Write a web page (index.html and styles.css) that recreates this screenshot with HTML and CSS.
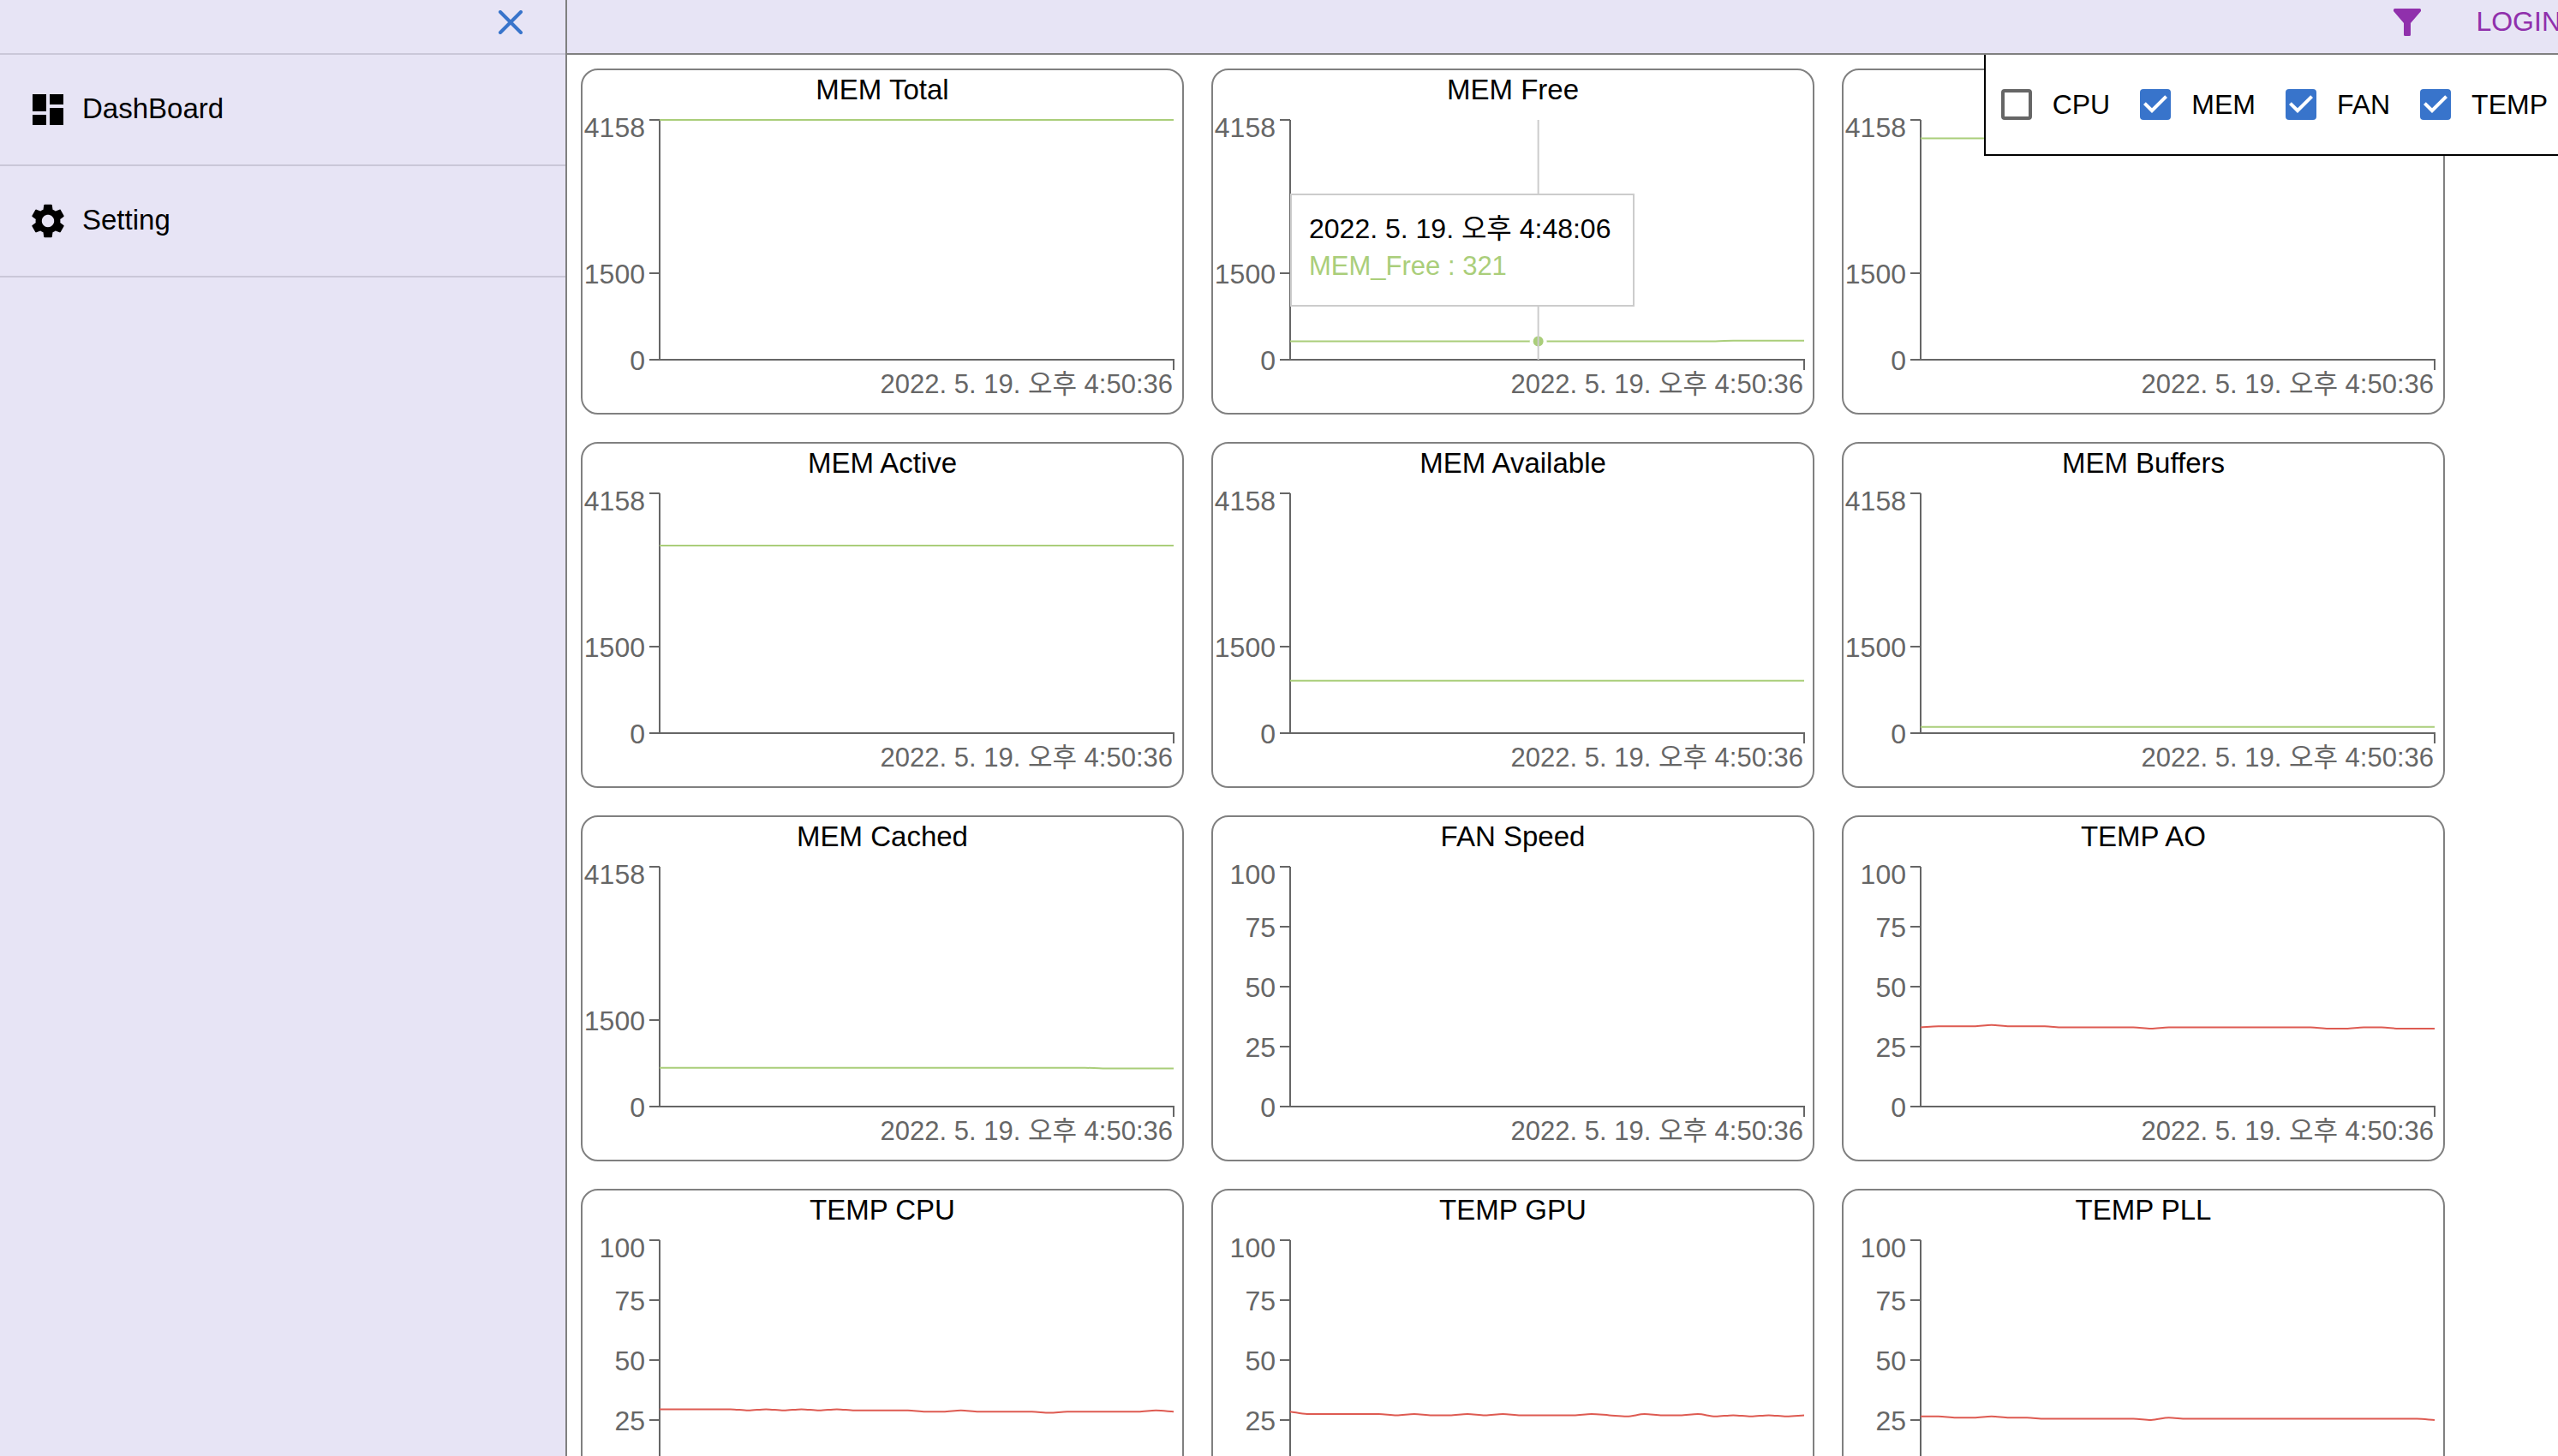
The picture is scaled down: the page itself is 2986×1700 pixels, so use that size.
FILE: index.html
```html
<!DOCTYPE html>
<html lang="ko">
<head>
<meta charset="utf-8">
<meta name="viewport" content="width=device-width, initial-scale=1">
<title>DashBoard</title>
<link rel="stylesheet" href="styles.css">
</head>
<body>
<div class="app">
  <aside class="sidebar">
    <div class="sidebar-top">
      <button class="icon-button close-button" type="button" aria-label="Close menu">
        <svg class="close-icon" viewBox="0 0 28 28" aria-hidden="true"><path d="M2 2L26 26M26 2L2 26"/></svg>
      </button>
    </div>
    <nav>
      <a class="nav-item" href="#dashboard">
        <svg class="nav-icon" viewBox="0 0 24 24" aria-hidden="true"><path d="M3 13h8V3H3v10zm0 8h8v-6H3v6zm10 0h8V11h-8v10zm0-18v6h8V3h-8z"/></svg>
        <span class="nav-label">DashBoard</span>
      </a>
      <a class="nav-item" href="#setting">
        <svg class="nav-icon" viewBox="0 0 24 24" aria-hidden="true"><path d="M19.14 12.94c.04-.3.06-.61.06-.94 0-.32-.02-.64-.07-.94l2.03-1.58c.18-.14.23-.41.12-.61l-1.92-3.32c-.12-.22-.37-.29-.59-.22l-2.39.96c-.5-.38-1.03-.7-1.62-.94l-.36-2.54c-.04-.24-.24-.41-.48-.41h-3.84c-.24 0-.43.17-.47.41l-.36 2.54c-.59.24-1.13.57-1.62.94l-2.39-.96c-.22-.08-.47 0-.59.22L2.74 8.87c-.12.21-.08.47.12.61l2.03 1.58c-.05.3-.09.63-.09.94s.02.64.07.94l-2.03 1.58c-.18.14-.23.41-.12.61l1.92 3.32c.12.22.37.29.59.22l2.39-.96c.5.38 1.03.7 1.62.94l.36 2.54c.05.24.24.41.48.41h3.84c.24 0 .44-.17.47-.41l.36-2.54c.59-.24 1.13-.56 1.62-.94l2.39.96c.22.08.47 0 .59-.22l1.92-3.32c.12-.22.07-.47-.12-.61l-2.01-1.58zM12 15.6c-1.98 0-3.6-1.62-3.6-3.6s1.62-3.6 3.6-3.6 3.6 1.62 3.6 3.6-1.62 3.6-3.6 3.6z"/></svg>
        <span class="nav-label">Setting</span>
      </a>
    </nav>
  </aside>

  <div class="content">
    <header class="topbar">
      <div class="topbar-tools">
        <button class="icon-button filter-button" type="button" aria-label="Filter">
          <svg class="filter-icon" viewBox="0 0 32 32" aria-hidden="true"><path d="M1.500 0H30.500Q32 0 32 1.500V3L20 17V30.500Q20 32 18.500 32H13.500Q12 32 12 30.500V17L0 3V1.500Q0 0 1.500 0Z"/></svg>
        </button>
        <button class="login-button" type="button">LOGIN</button>
      </div>
    </header>
    <form class="filter-panel">
      <label class="filter-option"><input type="checkbox" name="cpu">CPU</label>
      <label class="filter-option"><input type="checkbox" name="mem" checked>MEM</label>
      <label class="filter-option"><input type="checkbox" name="fan" checked>FAN</label>
      <label class="filter-option"><input type="checkbox" name="temp" checked>TEMP</label>
    </form>
    <main class="charts" id="charts"></main>
  </div>
</div>
<script src="charts.js"></script>
</body>
</html>
```
FILE: styles.css
```css
* {
  box-sizing: border-box;
}

body {
  margin: 0;
  background: #fff;
  color: #000;
  font-family: "Liberation Sans", "Noto Sans CJK KR", sans-serif;
  font-size: 32px;
  line-height: 36px;
}

button {
  padding: 0;
  border: 0;
  background: none;
  font: inherit;
  cursor: pointer;
}

.app {
  display: flex;
  height: 100vh;
  overflow: hidden;
}

/* Sidebar */
.sidebar {
  flex: 0 0 662px;
  border-right: 2px solid #808080;
  background: #e7e4f5;
}

.sidebar-top {
  display: flex;
  align-items: center;
  justify-content: flex-end;
  height: 64px;
  padding: 0 48px 10px 0;
  border-bottom: 2px solid #cac7d8;
}

.icon-button {
  display: flex;
}

.close-icon {
  width: 32px;
  height: 28px;
  fill: none;
  stroke: #3874cb;
  stroke-width: 4;
  stroke-linecap: round;
}

.nav-item {
  display: flex;
  align-items: center;
  gap: 16px;
  height: 130px;
  padding: 0 32px;
  border-bottom: 2px solid #cac7d8;
  color: inherit;
  font-size: 33px;
  text-decoration: none;
}

.nav-icon {
  width: 48px;
  height: 48px;
}

.nav-label {
  padding-bottom: 2px;
}

/* Top bar */
.content {
  position: relative;
  flex: 1;
  min-width: 0;
  overflow: hidden;
}

.topbar {
  display: flex;
  justify-content: flex-end;
  height: 64px;
  padding: 8px 0;
  border-bottom: 2px solid #808080;
  background: #e7e4f5;
}

.topbar-tools {
  display: flex;
  align-items: flex-start;
  gap: 64px;
  margin-right: -4px;
}

.filter-icon {
  width: 32px;
  height: 36px;
  fill: #9030ac;
}

.login-button {
  color: #9030ac;
  line-height: 34px;
}

.filter-panel {
  position: absolute;
  z-index: 2;
  top: 64px;
  right: 0;
  display: flex;
  align-items: center;
  gap: 35px;
  height: 118px;
  padding: 0 12px 0 18px;
  border: solid #000;
  border-width: 0 0 2px 2px;
  background: #fff;
}

.filter-option {
  display: flex;
  align-items: center;
  gap: 24px;
}

.filter-option input {
  appearance: none;
  width: 36px;
  height: 36px;
  margin: 0;
  border: 4px solid #666;
  border-radius: 4px;
}

.filter-option input:checked {
  border: 0;
  background: #3874cb url("data:image/svg+xml,%3Csvg xmlns='http://www.w3.org/2000/svg' viewBox='3 3 18 18'%3E%3Cpath fill='white' d='M10 17l-5-5 1.41-1.41L10 14.17l7.59-7.59L19 8l-9 9z'/%3E%3C/svg%3E");
}

/* Chart cards */
.charts {
  display: grid;
  grid-template-columns: repeat(auto-fill, 704px);
  gap: 32px;
  padding: 16px;
}

.card {
  position: relative;
  height: 404px;
  border: 2px solid #808080;
  border-radius: 20px;
}

.card-title {
  margin: 0;
  padding-top: 6px;
  font-size: 33px;
  font-weight: 400;
  line-height: 34px;
  text-align: center;
}

.chart {
  display: block;
  width: 700px;
  height: 350px;
}

.axis {
  fill: none;
  stroke: #666;
  stroke-width: 2;
}

.tick {
  fill: #666;
  font-size: 32px;
  text-anchor: end;
}

.tick-time {
  font-size: 31px;
}

.line {
  fill: none;
  stroke-width: 2;
}

.line-mem {
  stroke: #aace7a;
}

.line-temp {
  stroke: #de5b52;
}

.dot {
  fill: #aace7a;
  stroke: #fff;
  stroke-width: 4;
}

.cursor {
  stroke: #ccc;
  stroke-width: 2;
}

.tooltip {
  position: absolute;
  top: 144px;
  left: 90px;
  min-width: 402px;
  height: 132px;
  padding: 20px;
  border: 2px solid #ccc;
  background: #fff;
  line-height: 38px;
  white-space: nowrap;
}

.tooltip p {
  margin: 0;
}

.tooltip .tooltip-value {
  padding-top: 6px;
  color: #aace7a;
  font-size: 31px;
}
```
FILE: charts.js
```js
const PLOT = { left: 90, right: 690, top: 18, bottom: 298 };
const POINTS = 30;
const END_TIME = "2022. 5. 19. 오후 4:50:36";

const flat = (value) => Array(POINTS).fill(value);
// Expands [value, count] pairs into one reading per sample.
const runs = (...pairs) => pairs.flatMap(([value, count]) => Array(count).fill(value));

const MEM = { kind: "mem", max: 4158, ticks: [0, 1500, 4158] };
const FAN = { kind: "fan", max: 100, ticks: [0, 25, 50, 75, 100] };
const TEMP = { kind: "temp", max: 100, ticks: [0, 25, 50, 75, 100] };

const charts = [
  { title: "MEM Total", ...MEM, data: flat(4158) },
  { title: "MEM Free", ...MEM, data: runs([321, 25], [330, 5]), active: 14,
    tooltip: { time: "2022. 5. 19. 오후 4:48:06", text: "MEM_Free : 321" } },
  { title: "MEM Used", ...MEM, data: runs([3837, 25], [3828, 5]) },
  { title: "MEM Active", ...MEM, data: flat(3252) },
  { title: "MEM Available", ...MEM, data: flat(910) },
  { title: "MEM Buffers", ...MEM, data: flat(108) },
  { title: "MEM Cached", ...MEM, data: runs([671, 25], [662, 5]) },
  { title: "FAN Speed", ...FAN, data: [] },
  { title: "TEMP AO", ...TEMP, data: runs([33, 1], [33.5, 3], [34, 1], [33.5, 3], [33, 5], [32.5, 1], [33, 9], [32.5, 2], [33, 2], [32.5, 3]) },
  { title: "TEMP CPU", ...TEMP, data: runs([29.5, 5], [29, 1], [29.5, 1], [29, 1], [29.5, 1], [29, 1], [29.5, 1], [29, 4], [28.5, 2], [29, 1], [28.5, 4], [28, 1], [28.5, 5], [29, 1], [28.5, 1]) },
  { title: "TEMP GPU", ...TEMP, data: runs([28.5, 1], [27.5, 5], [27, 1], [27.5, 1], [27, 2], [27.5, 1], [27, 1], [27.5, 1], [27, 4], [27.5, 1], [27, 1], [26.5, 1], [27.5, 1], [27, 2], [27.5, 1], [26.5, 1], [27, 1], [26.5, 1], [27, 1], [26.5, 1], [27, 1]) },
  { title: "TEMP PLL", ...TEMP, data: runs([26.5, 2], [26, 2], [26.5, 1], [26, 2], [25.5, 6], [25, 1], [26, 1], [25.5, 14], [25, 1]) },
];

const xAt = (i) => PLOT.left + (i * (PLOT.right - PLOT.left)) / (POINTS - 1);
const yAt = (value, max) => PLOT.bottom - (value / max) * (PLOT.bottom - PLOT.top);

// Monotone cubic curve: tangents are flat wherever the direction changes.
function curve(data, max) {
  const pts = data.map((v, i) => [xAt(i), yAt(v, max)]);
  const step = xAt(1) - xAt(0);
  const slope = pts.slice(1).map((p, i) => (p[1] - pts[i][1]) / step);
  const tangent = pts.map((_, i) => {
    if (i === 0) return slope[0];
    if (i === pts.length - 1) return slope[i - 1];
    const a = slope[i - 1];
    const b = slope[i];
    return a * b <= 0 ? 0 : (2 * a * b) / (a + b);
  });
  const third = step / 3;
  return pts.slice(1).reduce((d, [x, y], i) => {
    const [px, py] = pts[i];
    return d + `C${px + third},${py + tangent[i] * third},${x - third},${y - tangent[i + 1] * third},${x},${y}`;
  }, `M${pts[0][0]},${pts[0][1]}`);
}

function chartSvg({ title, kind, max, ticks, data, active }) {
  const marks = ticks.map((t) => {
    const y = Math.round(yAt(t, max));
    const baseline = t === max ? y + 20 : y + 12;
    return `<path class="axis" d="M${PLOT.left - 12} ${y}H${PLOT.left}"/><text class="tick" x="73" y="${baseline}">${t}</text>`;
  }).join("");
  const line = data.length ? `<path class="line line-${kind}" d="${curve(data, max)}"/>` : "";
  const marker = active === undefined ? "" :
    `<circle class="dot" cx="${xAt(active)}" cy="${yAt(data[active], max)}" r="8"/>` +
    `<path class="cursor" d="M${xAt(active)} ${PLOT.top}V${PLOT.bottom}"/>`;
  return `<svg class="chart" viewBox="0 0 700 350" role="img" aria-label="${title}">
    <path class="axis" d="M${PLOT.left} ${PLOT.top}V${PLOT.bottom}H${PLOT.right}V${PLOT.bottom + 12}"/>
    ${marks}<text class="tick tick-time" x="689" y="337">${END_TIME}</text>${line}${marker}</svg>`;
}

document.getElementById("charts").innerHTML = charts.map((c) => `
  <section class="card">
    <h2 class="card-title">${c.title}</h2>
    ${chartSvg(c)}
    ${c.tooltip ? `<div class="tooltip"><p>${c.tooltip.time}</p><p class="tooltip-value">${c.tooltip.text}</p></div>` : ""}
  </section>`).join("");
```
